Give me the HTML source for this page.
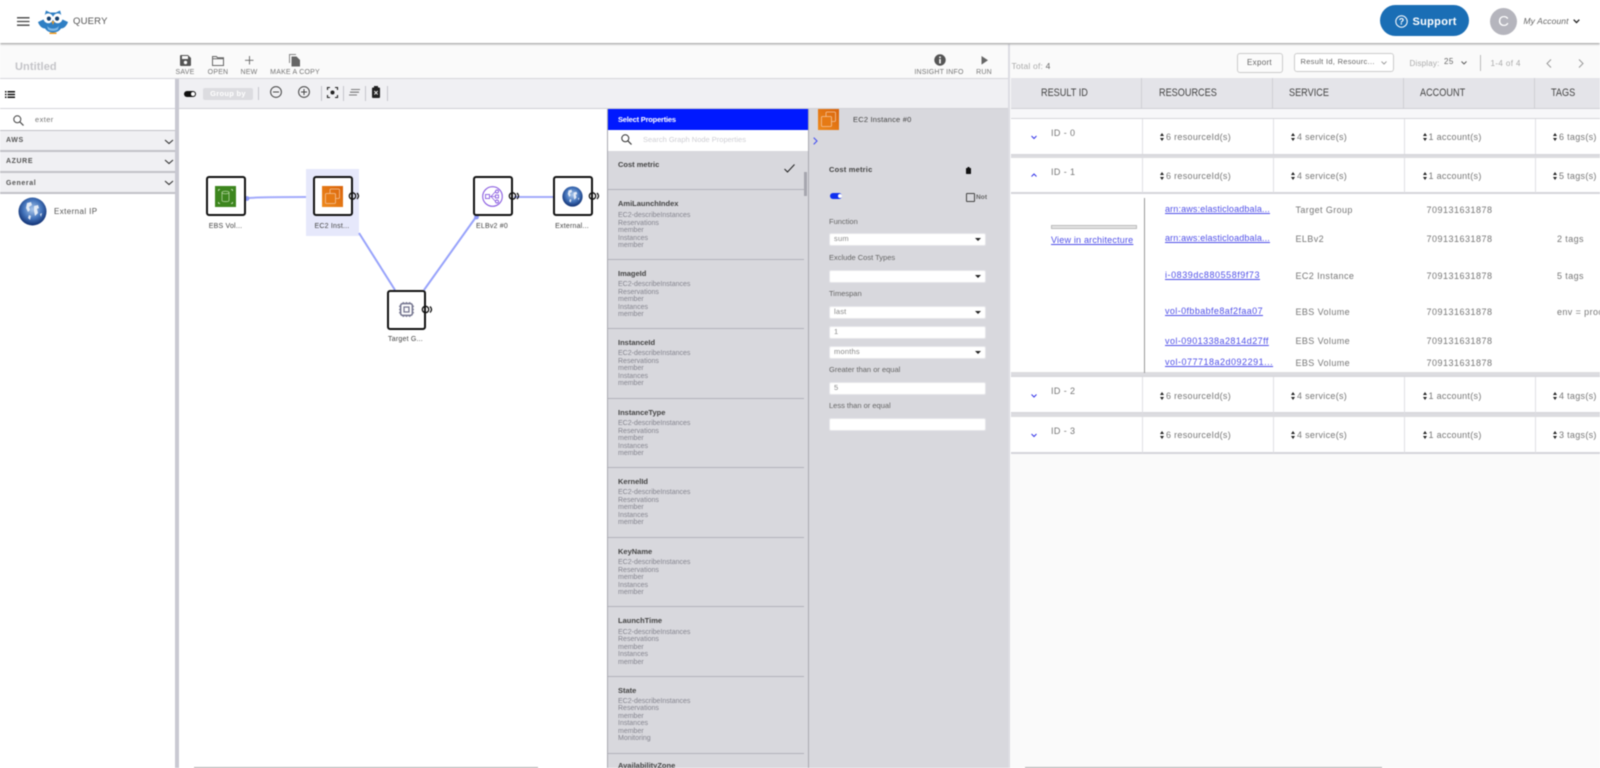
<!DOCTYPE html>
<html><head><meta charset="utf-8"><title>Query</title>
<style>
*{box-sizing:border-box}
html,body{margin:0;padding:0;width:1600px;height:768px;overflow:hidden;background:#fff;font-family:"Liberation Sans",sans-serif;color:#555}
#w{position:relative;width:1600px;height:768px;overflow:hidden;filter:blur(.45px)}
.a{position:absolute}
.t{position:absolute;white-space:nowrap;line-height:12px;font-size:8px;letter-spacing:.4px}
.c{transform:translateX(-50%)}
.b{font-weight:700}
svg{position:absolute;overflow:visible}
.sep{position:absolute;width:1px;background:#c6c6cc}
.acc{position:absolute;left:0;width:175px;height:20px;background:#f0f0f3;border-bottom:2px solid #c2c2c8}
.node{position:absolute;width:39.5px;height:40px;border:2px solid #111;border-radius:3px;background:#fff}
.nl{position:absolute;font-size:7px;letter-spacing:.2px;color:#444;line-height:10px;white-space:nowrap;transform:translateX(-50%)}
.line{position:absolute;left:608px;width:196px;height:1px;background:#b3b3ba}
.h{position:absolute;left:618px;font-size:7.5px;font-weight:700;color:#444;letter-spacing:0;line-height:10px;white-space:nowrap}
.s{position:absolute;left:618px;font-size:7px;color:#85858f;letter-spacing:0;line-height:7.5px;white-space:pre}
.lb{position:absolute;left:829px;font-size:7.5px;color:#666;letter-spacing:0;line-height:10px;white-space:nowrap}
.in{position:absolute;left:829px;width:157px;height:12.5px;background:#fff;border:1px solid #e5e5e9;border-radius:2px;font-size:7.5px;color:#888;line-height:10.5px;padding-left:4px;letter-spacing:.2px}
.in.sel:after{content:"";position:absolute;right:4px;top:4px;border:3px solid transparent;border-top:3.5px solid #222;border-bottom:0}
.th{position:absolute;top:78px;height:31px;background:#e4e4e9;border-right:1px solid #cfcfd5;border-bottom:1px solid #cfcfd5;font-size:11px;line-height:30px;color:#444}
.th span{display:inline-block;transform:scaleX(.83);transform-origin:left center}
.row{position:absolute;left:1011px;width:589px;background:#fff;border-top:1px solid #d5d5da;border-bottom:2px solid #d5d5da}
.v{position:absolute;width:1px;background:#e0e0e4}
.r{position:absolute;font-size:9px;color:#777;letter-spacing:.4px;line-height:12px;white-space:nowrap}
.lk{position:absolute;left:1165px;font-size:9px;color:#4f4fe8;text-decoration:underline;letter-spacing:.45px;line-height:12px;white-space:nowrap}
.ar{letter-spacing:.3px}
.ar:before{content:"";position:absolute;left:-6px;top:2px;border:2px solid transparent;border-bottom:3px solid #222;border-top:0}
.ar:after{content:"";position:absolute;left:-6px;top:6.5px;border:2px solid transparent;border-top:3px solid #222;border-bottom:0}
.tl{position:absolute;top:68px;font-size:7px;color:#777;letter-spacing:.2px;line-height:10px;white-space:nowrap;transform:translateX(-50%)}
</style></head><body><div id="w">

<!-- header -->
<div class="a" style="left:0;top:0;width:1600px;height:43px;background:#fff;box-shadow:0 1px 2px #8f8f8f;z-index:5"></div>
<div style="position:absolute;z-index:6;left:0;top:0;width:1600px;height:43px">
<svg style="left:17px;top:17px" width="13" height="9"><path d="M0 .8H12.5M0 4.5H12.5M0 8.2H12.5" stroke="#444" stroke-width="1.3"/></svg>
<svg style="left:38px;top:9.5px" width="30" height="24" viewBox="0 0 30 24">
<path d="M0 12L6.5 9C6.5 6 7 3 8 .5L12 2.5H18L22 .5C23 3 23.5 6 23.5 9L30 12C28.5 16.5 25.5 18.5 23 18.5C21 21.5 18 22.5 15 22.5C12 22.5 9 21.5 7 18.5C4.5 18.5 1.5 16.5 0 12Z" fill="#2f7fc4"/>
<circle cx="10.3" cy="8.3" r="4.9" fill="#fff"/><circle cx="19.7" cy="8.3" r="4.9" fill="#fff"/>
<circle cx="10.9" cy="8.6" r="2.1" fill="#16406e"/><circle cx="19.1" cy="8.6" r="2.1" fill="#16406e"/>
<path d="M13.6 11.2h2.8L15 15z" fill="#f09a1e"/><path d="M11.5 22.5h7V24h-7z" fill="#f09a1e"/>
<path d="M9 15.5C11 19.5 19 19.5 21 15.5L20 19.5C18 21.5 12 21.5 10 19.5Z" fill="#7db7e6"/></svg>
<div class="t" style="left:73px;top:15.5px;font-size:9.5px;color:#555;letter-spacing:.2px">QUERY</div>
<div class="a" style="left:1380px;top:5px;width:89px;height:31px;border-radius:16px;background:#1a6eb5"></div>
<svg style="left:1395px;top:14.5px" width="13" height="13" viewBox="0 0 13 13"><circle cx="6.5" cy="6.5" r="5.7" fill="none" stroke="#fff" stroke-width="1"/><text x="6.5" y="9.6" font-size="9" font-weight="700" fill="#fff" text-anchor="middle" font-family="Liberation Sans">?</text></svg>
<div class="t b" style="left:1412.5px;top:15.5px;font-size:11px;color:#fff;letter-spacing:.3px">Support</div>
<div class="a" style="left:1490px;top:8px;width:27px;height:27px;border-radius:50%;background:#b5b5bd;color:#fff;font-size:15px;line-height:27px;text-align:center">C</div>
<div class="t" style="left:1523.5px;top:15px;font-style:italic;font-size:8.5px;color:#666;letter-spacing:.1px">My Account</div>
<svg style="left:1573px;top:19px" width="7" height="5"><path d="M.7.7L3.5 3.6 6.3.7" fill="none" stroke="#222" stroke-width="1.3"/></svg>
</div>

<!-- top toolbar -->
<div class="a" style="left:0;top:44px;width:1009px;height:35px;background:#fafafa;border-bottom:1px solid #d6d6db"></div>
<div class="t b" style="left:15px;top:61px;font-size:11px;color:#c4c4c8;letter-spacing:.1px">Untitled</div>
<svg style="left:180px;top:55px" width="11" height="11"><path d="M0 1a1 1 0 011-1h7l3 3v7a1 1 0 01-1 1H1a1 1 0 01-1-1z" fill="#555"/><rect x="2" y="1" width="6" height="3" fill="#fafafa"/><circle cx="5.5" cy="7.5" r="1.7" fill="#fafafa"/></svg>
<div class="tl" style="left:185px">SAVE</div>
<svg style="left:212px;top:55.5px" width="12" height="10"><path d="M.5 9.5V.5H4.5L5.5 1.8H11.5V9.5ZM.5 2.8H11.5" fill="none" stroke="#666" stroke-width="1"/></svg>
<div class="tl" style="left:218px">OPEN</div>
<svg style="left:245px;top:56px" width="9" height="9"><path d="M4.5 0V8.5M0 4.3H8.5" stroke="#666" stroke-width=".9"/></svg>
<div class="tl" style="left:249px">NEW</div>
<svg style="left:289px;top:53.5px" width="12" height="13"><path d="M.5 9V.5H7" fill="none" stroke="#888" stroke-width="1"/><path d="M2.5 2.5H7.5L11 6V12.5H2.5Z" fill="#666"/></svg>
<div class="tl" style="left:295px">MAKE A COPY</div>
<svg style="left:934px;top:54px" width="12" height="12"><circle cx="6" cy="6" r="5.7" fill="#555"/><rect x="5.2" y="5" width="1.6" height="4.5" fill="#fff"/><rect x="5.2" y="2.5" width="1.6" height="1.6" fill="#fff"/></svg>
<div class="tl" style="left:939px">INSIGHT INFO</div>
<svg style="left:981px;top:56px" width="8" height="9"><path d="M.5 0L7 4.3.5 8.6Z" fill="#666"/></svg>
<div class="tl" style="left:984px">RUN</div>

<!-- left panel -->
<div class="a" style="left:0;top:79px;width:175px;height:30px;background:#fff;border-bottom:1px solid #d5d5da"></div>
<svg style="left:5px;top:90.5px" width="10" height="7"><path d="M0 .8H1.5M0 3.5H1.5M0 6.2H1.5M2.5 .8H10M2.5 3.5H10M2.5 6.2H10" stroke="#111" stroke-width="1.5"/></svg>
<svg style="left:13px;top:115px" width="11" height="11"><circle cx="4.3" cy="4.3" r="3.5" fill="none" stroke="#444" stroke-width="1"/><path d="M7 7L10.5 10.5" stroke="#444" stroke-width="1.2"/></svg>
<div class="t" style="left:35px;top:113.5px;color:#777;font-size:7.5px">exter</div>
<div class="acc" style="top:130px;border-top:1px solid #c2c2c8;height:22px"></div>
<div class="acc" style="top:152px;height:21px"></div>
<div class="acc" style="top:173px;height:21px"></div>
<div class="t b" style="left:6px;top:135px;font-size:7px;letter-spacing:.6px;color:#555">AWS</div>
<div class="t b" style="left:6px;top:156px;font-size:7px;letter-spacing:.6px;color:#555">AZURE</div>
<div class="t b" style="left:6px;top:177.5px;font-size:7px;letter-spacing:.6px;color:#555">General</div>
<svg style="left:164px;top:138.5px" width="10" height="6"><path d="M1 1L5 4.5 9 1" fill="none" stroke="#333" stroke-width="1.1"/></svg>
<svg style="left:164px;top:159px" width="10" height="6"><path d="M1 1L5 4.5 9 1" fill="none" stroke="#333" stroke-width="1.1"/></svg>
<svg style="left:164px;top:180px" width="10" height="6"><path d="M1 1L5 4.5 9 1" fill="none" stroke="#333" stroke-width="1.1"/></svg>
<svg style="left:18px;top:197px" width="29" height="29" viewBox="0 0 29 29"><defs><radialGradient id="g" cx=".5" cy=".42" r=".6"><stop offset="0" stop-color="#a9c6ea"/><stop offset=".55" stop-color="#4474bb"/><stop offset="1" stop-color="#0c2a6c"/></radialGradient></defs><circle cx="14.5" cy="14.5" r="14" fill="url(#g)"/><path d="M9 6l4-1 1 3-3 2 1 3-2 2-2-4zM16 9l4-1 1 3-2 1 1 4-3 3-1-5zM11 18l2 1-1 4-2-2zM22 17l2-1-1 4z" fill="#eef3fa" opacity=".9"/></svg>
<div class="t" style="left:54px;top:205.5px;font-size:8px;color:#555">External IP</div>
<div class="a" style="left:175px;top:79px;width:4px;height:689px;background:#c9c9d2"></div>

<!-- canvas toolbar -->
<div class="a" style="left:179px;top:79px;width:429px;height:30px;background:#f0f0f3;border-bottom:1px solid #d0d0d5"></div>
<div class="a" style="left:608px;top:79px;width:400px;height:30px;background:#f0f0f3;border-bottom:1px solid #d0d0d5"></div>
<div class="a" style="left:184px;top:91px;width:11.5px;height:6px;border-radius:3px;background:#111"></div>
<div class="a" style="left:190.5px;top:92px;width:4px;height:4px;border-radius:50%;background:#fff"></div>
<div class="a b" style="left:203px;top:88px;width:50px;height:12px;background:#dcdce0;border-radius:2px;color:#fff;font-size:7.5px;line-height:12px;text-align:center;letter-spacing:.3px">Group by</div>
<div class="sep" style="left:258px;top:87px;height:13px"></div>
<svg style="left:270px;top:86px" width="12" height="12"><circle cx="6" cy="6" r="5.4" fill="none" stroke="#444" stroke-width="1"/><path d="M3 6H9" stroke="#444"/></svg>
<svg style="left:298px;top:86px" width="12" height="12"><circle cx="6" cy="6" r="5.4" fill="none" stroke="#444" stroke-width="1"/><path d="M3 6H9M6 3V9" stroke="#444"/></svg>
<div class="sep" style="left:321px;top:86px;height:15px"></div>
<svg style="left:327px;top:87px" width="11" height="11"><path d="M.5 3V.5H3M8 .5H10.5V3M10.5 8V10.5H8M3 10.5H.5V8" fill="none" stroke="#222" stroke-width="1.1"/><circle cx="5.5" cy="5.5" r="2" fill="#222"/></svg>
<div class="sep" style="left:343px;top:86px;height:15px"></div>
<svg style="left:349px;top:89px" width="11" height="7"><path d="M2 .5H11M1 3.2H10M0 6H8" stroke="#555" stroke-width=".8"/></svg>
<div class="sep" style="left:365px;top:86px;height:15px"></div>
<svg style="left:372px;top:86px" width="8" height="12"><rect x="2" y="0" width="4" height="1.5" fill="#222"/><rect x="0" y="1.5" width="8" height="10.5" rx="1" fill="#222"/><path d="M2.3 5L5.7 8.5M5.7 5L2.3 8.5" stroke="#eee" stroke-width="1"/></svg>
<div class="sep" style="left:387px;top:86px;height:15px"></div>

<!-- canvas edges -->
<div class="a" style="left:306px;top:169px;width:53px;height:67px;background:#e6e8fb"></div>
<svg style="left:0;top:0" width="1600" height="768">
<path d="M246 198C265 197 285 197 306 197" fill="none" stroke="#a3abfc" stroke-width="2"/>
<path d="M359 233L395 290" fill="none" stroke="#98a3fb" stroke-width="2"/>
<path d="M424 290L476 217" fill="none" stroke="#98a3fb" stroke-width="2"/>
<path d="M514 197C528 197 540 197 553 197" fill="none" stroke="#a3abfc" stroke-width="2"/>
<circle cx="247" cy="198.5" r="2.4" fill="#8f9bfa"/><circle cx="476.5" cy="217" r="2.4" fill="#8f9bfa"/>
</svg>

<!-- nodes -->
<div class="node" style="left:206px;top:176px"></div>
<svg style="left:215px;top:186px" width="21" height="21" viewBox="0 0 21 21"><rect width="21" height="21" fill="#3d861e"/><ellipse cx="10.5" cy="6.5" rx="3.5" ry="1.3" fill="none" stroke="#c4dfb2" stroke-width=".7"/><path d="M7 6.5V14.5C7 16 14 16 14 14.5V6.5" fill="none" stroke="#c4dfb2" stroke-width=".7"/><path d="M3.5 3.5h1.5M3.5 3.5v1.5M17.5 3.5h-1.5M17.5 3.5v1.5M3.5 17.5h1.5M3.5 17.5v-1.5M17.5 17.5h-1.5M17.5 17.5v-1.5" stroke="#d8eacb" stroke-width=".8"/></svg>
<div class="nl" style="left:225.5px;top:222px">EBS Vol...</div>

<div class="node" style="left:313px;top:176px"></div>
<svg style="left:322px;top:186px" width="21" height="21" viewBox="0 0 21 21"><defs><linearGradient id="o" x1="0" y1="1" x2="1" y2="0"><stop offset="0" stop-color="#ee8a1c"/><stop offset="1" stop-color="#d9640c"/></linearGradient></defs><rect width="21" height="21" fill="url(#o)"/><rect x="8" y="3" width="9.5" height="9.5" rx="1" fill="none" stroke="#f5c49a" stroke-width=".8"/><rect x="3.5" y="7.5" width="10" height="10" rx="1" fill="#e67a14" stroke="#f5c49a" stroke-width=".8"/></svg>
<div class="nl" style="left:332px;top:222px">EC2 Inst...</div>

<div class="node" style="left:386.5px;top:290px"></div>
<svg style="left:398.5px;top:302px" width="15" height="15" viewBox="0 0 14 14"><rect x="1.5" y="1.5" width="11" height="11" rx="2" fill="none" stroke="#757690" stroke-width="1.5"/><rect x="4.7" y="4.7" width="4.6" height="4.6" fill="none" stroke="#757690" stroke-width="1.2"/><path d="M4 0v1.5M7 0v1.5M10 0v1.5M4 12.5V14M7 12.5V14M10 12.5V14M0 4h1.5M0 7h1.5M0 10h1.5M12.5 4H14M12.5 7H14M12.5 10H14" stroke="#757690" stroke-width="1"/></svg>
<div class="nl" style="left:405.5px;top:334.5px">Target G...</div>

<div class="node" style="left:473px;top:176px"></div>
<svg style="left:482px;top:186px" width="21" height="21" viewBox="0 0 21 21"><circle cx="10.5" cy="10.5" r="9.8" fill="none" stroke="#8a5ce0" stroke-width="1.1"/><rect x="3.5" y="8.5" width="4" height="4" fill="none" stroke="#8a5ce0" stroke-width=".9"/><path d="M7.5 10.5H13.5M9 10.5L13.5 5.5M9 10.5L13.5 15.5" stroke="#8a5ce0" stroke-width=".8"/><circle cx="15" cy="5.5" r="1.5" fill="none" stroke="#8a5ce0" stroke-width=".9"/><rect x="13.5" y="9" width="3" height="3" fill="none" stroke="#8a5ce0" stroke-width=".9"/><circle cx="15" cy="15.5" r="1.5" fill="none" stroke="#8a5ce0" stroke-width=".9"/></svg>
<div class="nl" style="left:492px;top:222px">ELBv2 #0</div>

<div class="node" style="left:553px;top:176px"></div>
<svg style="left:562px;top:186px" width="21" height="21" viewBox="0 0 29 29"><circle cx="14.5" cy="14.5" r="14" fill="url(#g)"/><path d="M9 6l4-1 1 3-3 2 1 3-2 2-2-4zM16 9l4-1 1 3-2 1 1 4-3 3-1-5zM11 18l2 1-1 4-2-2zM22 17l2-1-1 4z" fill="#eef3fa" opacity=".9"/></svg>
<div class="nl" style="left:572px;top:222px">External...</div>

<svg style="left:0;top:0" width="1600" height="768" fill="none" stroke="#111" stroke-width="1.3">
<circle cx="352.5" cy="196" r="3.2"/><path d="M357 193C359 195 359 197 357 199"/>
<circle cx="425.5" cy="309.5" r="3.2"/><path d="M430 306.5C432 308.5 432 310.5 430 312.5"/>
<circle cx="512.5" cy="196" r="3.2"/><path d="M517 193C519 195 519 197 517 199"/>
<circle cx="592.5" cy="196" r="3.2"/><path d="M597 193C599 195 599 197 597 199"/>
</svg>

<!-- select properties panel -->
<div class="a" style="left:607px;top:109px;width:1px;height:659px;background:#a9a9b1"></div>
<div class="a" style="left:608px;top:109px;width:200px;height:21px;background:#0019ff"></div>
<div class="t b" style="left:618px;top:114px;color:#fff;font-size:7.5px;letter-spacing:-.2px">Select Properties</div>
<div class="a" style="left:608px;top:130px;width:200px;height:22px;background:#fff"></div>
<svg style="left:621px;top:134px" width="11" height="11"><circle cx="4.3" cy="4.3" r="3.5" fill="none" stroke="#333" stroke-width="1"/><path d="M7 7L10.5 10.5" stroke="#333" stroke-width="1.2"/></svg>
<div class="t" style="left:643px;top:134px;color:#cfcfd4;font-size:7.5px;letter-spacing:0">Search Graph Node Properties</div>
<div class="a" style="left:608px;top:151px;width:200px;height:617px;background:#d8d8dd"></div>
<div class="a" style="left:808px;top:109px;width:200px;height:659px;background:#d8d8dd;border-left:1px solid #a9a9b1"></div>
<div class="a" style="left:804px;top:172px;width:3px;height:24px;background:#a6a6ae"></div>

<div class="h" style="top:160px">Cost metric</div>
<svg style="left:784px;top:164px" width="11" height="9"><path d="M.5 5L3.5 8 10.5.5" fill="none" stroke="#222" stroke-width="1"/></svg>
<div class="line" style="top:189px;height:1px"></div>

<div class="h" style="top:198.5px">AmiLaunchIndex</div>
<div class="s" style="top:212px">EC2-describeInstances
Reservations
member
Instances
member</div>
<div class="line" style="top:258.5px"></div>

<div class="h" style="top:269px">ImageId</div>
<div class="s" style="top:281px">EC2-describeInstances
Reservations
member
Instances
member</div>
<div class="line" style="top:328px"></div>

<div class="h" style="top:338px">InstanceId</div>
<div class="s" style="top:350px">EC2-describeInstances
Reservations
member
Instances
member</div>
<div class="line" style="top:398px"></div>

<div class="h" style="top:408px">InstanceType</div>
<div class="s" style="top:420px">EC2-describeInstances
Reservations
member
Instances
member</div>
<div class="line" style="top:467px"></div>

<div class="h" style="top:477px">KernelId</div>
<div class="s" style="top:489px">EC2-describeInstances
Reservations
member
Instances
member</div>
<div class="line" style="top:537px"></div>

<div class="h" style="top:546.5px">KeyName</div>
<div class="s" style="top:559px">EC2-describeInstances
Reservations
member
Instances
member</div>
<div class="line" style="top:606px"></div>

<div class="h" style="top:616px">LaunchTime</div>
<div class="s" style="top:628.5px">EC2-describeInstances
Reservations
member
Instances
member</div>
<div class="line" style="top:676px"></div>

<div class="h" style="top:685.5px">State</div>
<div class="s" style="top:697.5px">EC2-describeInstances
Reservations
member
Instances
member
Monitoring</div>
<div class="line" style="top:753px"></div>
<div class="h" style="top:761px">AvailabilityZone</div>

<!-- node props -->
<svg style="left:818px;top:109px" width="21" height="21" viewBox="0 0 21 21"><rect width="21" height="21" fill="url(#o)"/><rect x="8" y="3" width="9.5" height="9.5" rx="1" fill="none" stroke="#f5c49a" stroke-width=".8"/><rect x="3.5" y="7.5" width="10" height="10" rx="1" fill="#e67a14" stroke="#f5c49a" stroke-width=".8"/></svg>
<div class="t" style="left:853px;top:114px;color:#444;font-size:7.5px;letter-spacing:.2px">EC2 Instance #0</div>
<svg style="left:812.5px;top:136.5px" width="5" height="8"><path d="M.7.7L4 4 .7 7.3" fill="none" stroke="#4a55f0" stroke-width="1.1"/></svg>
<div class="t b" style="left:829px;top:164px;color:#444;font-size:7.5px;letter-spacing:.2px">Cost metric</div>
<svg style="left:966px;top:166.5px" width="5" height="7"><rect x="1.5" y="0" width="2" height="1" fill="#111"/><rect x="0" y="1" width="5" height="6" rx=".6" fill="#111"/></svg>
<div class="a" style="left:830px;top:193px;width:12px;height:6px;border-radius:3px;background:#1030f0"></div>
<div class="a" style="left:837.5px;top:194px;width:4px;height:4px;border-radius:50%;background:#fff"></div>
<div class="a" style="left:966px;top:193px;width:8.5px;height:8.5px;border:1px solid #444;border-radius:1px"></div>
<div class="t b" style="left:976px;top:191.5px;font-size:6.5px;letter-spacing:.1px;color:#666">Not</div>
<div class="lb" style="top:216.5px">Function</div>
<div class="in sel" style="top:233px">sum</div>
<div class="lb" style="top:253px">Exclude Cost Types</div>
<div class="in sel" style="top:270px"></div>
<div class="lb" style="top:288.5px">Timespan</div>
<div class="in sel" style="top:306px">last</div>
<div class="in" style="top:326px">1</div>
<div class="in sel" style="top:346px">months</div>
<div class="lb" style="top:365px">Greater than or equal</div>
<div class="in" style="top:382px">5</div>
<div class="lb" style="top:401px">Less than or equal</div>
<div class="in" style="top:418px"></div>

<!-- results -->
<div class="a" style="left:1008px;top:44px;width:2px;height:724px;background:#dcdce2"></div>
<div class="a" style="left:1010px;top:44px;width:590px;height:724px;background:#fafafa"></div>
<div class="t" style="left:1011.5px;top:59.5px;color:#aaa;font-size:8.5px;letter-spacing:.2px">Total of: <span style="color:#666">4</span></div>
<div class="a" style="left:1236.5px;top:53px;width:46px;height:19.5px;border:1px solid #ccc;border-radius:3px;background:#fbfbfb;color:#666;font-size:8px;line-height:18px;text-align:center;letter-spacing:.3px">Export</div>
<div class="a" style="left:1293.5px;top:53px;width:100px;height:18.5px;border:1px solid #ccc;border-radius:3px;background:#fff;color:#666;font-size:7.5px;line-height:16px;padding-left:6px;letter-spacing:.3px">Result Id, Resourc...</div>
<svg style="left:1381px;top:61px" width="6" height="4"><path d="M.5.5L3 3 5.5.5" fill="none" stroke="#888" stroke-width=".8"/></svg>
<div class="t" style="left:1409.5px;top:57.5px;color:#aaa;font-size:8px;letter-spacing:.2px">Display:</div>
<div class="t" style="left:1444px;top:56px;color:#666;font-size:8px">25</div>
<svg style="left:1460.5px;top:61px" width="6" height="4"><path d="M.5.5L3 3 5.5.5" fill="none" stroke="#555" stroke-width=".9"/></svg>
<div class="a" style="left:1479.5px;top:55px;width:1px;height:16px;background:#bbb"></div>
<div class="t" style="left:1490.5px;top:57.5px;color:#aaa;font-size:8px">1-4 of 4</div>
<svg style="left:1546px;top:58.5px" width="6" height="9"><path d="M5 .5L1 4.5 5 8.5" fill="none" stroke="#999" stroke-width="1"/></svg>
<svg style="left:1578px;top:58.5px" width="6" height="9"><path d="M1 .5L5 4.5 1 8.5" fill="none" stroke="#999" stroke-width="1"/></svg>

<div class="th" style="left:1011px;width:131px;padding-left:30px"><span>RESULT ID</span></div>
<div class="th" style="left:1142px;width:131px;padding-left:17px"><span>RESOURCES</span></div>
<div class="th" style="left:1273px;width:131px;padding-left:16px"><span>SERVICE</span></div>
<div class="th" style="left:1404px;width:131px;padding-left:16px"><span>ACCOUNT</span></div>
<div class="th" style="left:1535px;width:65px;padding-left:16px;border-right:0"><span>TAGS</span></div>

<div class="a" style="left:1010px;top:109px;width:590px;height:9px;background:#f7f7f9"></div>
<div class="row" style="top:118px;height:38px"></div>
<div class="row" style="top:157px;height:37px"></div>
<div class="a" style="left:1011px;top:194px;width:589px;height:179px;background:#fff"></div>
<div class="a" style="left:1011px;top:372px;width:589px;height:4px;background:#dcdce0"></div>
<div class="row" style="top:376px;height:38px"></div>
<div class="row" style="top:416px;height:38px"></div>
<div class="a" style="left:1011px;top:155px;width:589px;height:3px;background:#dcdce0"></div>
<div class="a" style="left:1011px;top:413px;width:589px;height:4px;background:#dcdce0"></div>

<div class="v" style="left:1142px;top:119px;height:35px"></div><div class="v" style="left:1273px;top:119px;height:35px"></div><div class="v" style="left:1404px;top:119px;height:35px"></div><div class="v" style="left:1535px;top:119px;height:35px"></div>
<div class="v" style="left:1142px;top:158px;height:35px"></div><div class="v" style="left:1273px;top:158px;height:35px"></div><div class="v" style="left:1404px;top:158px;height:35px"></div><div class="v" style="left:1535px;top:158px;height:35px"></div>
<div class="v" style="left:1142px;top:377px;height:36px"></div><div class="v" style="left:1273px;top:377px;height:36px"></div><div class="v" style="left:1404px;top:377px;height:36px"></div><div class="v" style="left:1535px;top:377px;height:36px"></div>
<div class="v" style="left:1142px;top:417px;height:36px"></div><div class="v" style="left:1273px;top:417px;height:36px"></div><div class="v" style="left:1404px;top:417px;height:36px"></div><div class="v" style="left:1535px;top:417px;height:36px"></div>

<svg style="left:0;top:0" width="1600" height="768" fill="none" stroke="#3535e8" stroke-width="1">
<path d="M1031.5 136L1034 138.5 1036.5 136"/><path d="M1031.5 176.5L1034 174 1036.5 176.5"/><path d="M1031.5 394.5L1034 397 1036.5 394.5"/><path d="M1031.5 434L1034 436.5 1036.5 434"/></svg>

<div class="r" style="left:1051px;top:127px">ID - 0</div>
<div class="r ar" style="left:1166px;top:131px">6 resourceId(s)</div>
<div class="r ar" style="left:1297px;top:131px">4 service(s)</div>
<div class="r ar" style="left:1428.5px;top:131px">1 account(s)</div>
<div class="r ar" style="left:1559px;top:131px">6 tags(s)</div>

<div class="r" style="left:1051px;top:166px">ID - 1</div>
<div class="r ar" style="left:1166px;top:170px">6 resourceId(s)</div>
<div class="r ar" style="left:1297px;top:170px">4 service(s)</div>
<div class="r ar" style="left:1428.5px;top:170px">1 account(s)</div>
<div class="r ar" style="left:1559px;top:170px">5 tags(s)</div>

<div class="r" style="left:1051px;top:385px">ID - 2</div>
<div class="r ar" style="left:1166px;top:390px">6 resourceId(s)</div>
<div class="r ar" style="left:1297px;top:390px">4 service(s)</div>
<div class="r ar" style="left:1428.5px;top:390px">1 account(s)</div>
<div class="r ar" style="left:1559px;top:390px">4 tags(s)</div>

<div class="r" style="left:1051px;top:425px">ID - 3</div>
<div class="r ar" style="left:1166px;top:429px">6 resourceId(s)</div>
<div class="r ar" style="left:1297px;top:429px">4 service(s)</div>
<div class="r ar" style="left:1428.5px;top:429px">1 account(s)</div>
<div class="r ar" style="left:1559px;top:429px">3 tags(s)</div>

<div class="a" style="left:1143.5px;top:198px;width:1px;height:175px;background:#999"></div>
<div class="a" style="left:1051px;top:225px;width:86px;height:4px;background:#e4e4e4;border:1px solid #bbb"></div>
<div class="lk" style="left:1051px;top:234px;letter-spacing:.2px">View in architecture</div>
<div class="lk" style="top:203px;letter-spacing:.15px">arn:aws:elasticloadbala...</div>
<div class="lk" style="top:232px;letter-spacing:.15px">arn:aws:elasticloadbala...</div>
<div class="lk" style="top:269px;letter-spacing:.55px">i-0839dc880558f9f73</div>
<div class="lk" style="top:305px;letter-spacing:.4px">vol-0fbbabfe8af2faa07</div>
<div class="lk" style="top:334.5px">vol-0901338a2814d27ff</div>
<div class="lk" style="top:356px;letter-spacing:.5px">vol-077718a2d092291...</div>

<div class="r" style="left:1295.5px;top:204px">Target Group</div>
<div class="r" style="left:1295.5px;top:233px">ELBv2</div>
<div class="r" style="left:1295.5px;top:269.5px">EC2 Instance</div>
<div class="r" style="left:1295.5px;top:306px">EBS Volume</div>
<div class="r" style="left:1295.5px;top:335px">EBS Volume</div>
<div class="r" style="left:1295.5px;top:357px">EBS Volume</div>

<div class="r" style="left:1426.5px;top:204px;letter-spacing:.5px">709131631878</div>
<div class="r" style="left:1426.5px;top:233px;letter-spacing:.5px">709131631878</div>
<div class="r" style="left:1426.5px;top:269.5px;letter-spacing:.5px">709131631878</div>
<div class="r" style="left:1426.5px;top:306px;letter-spacing:.5px">709131631878</div>
<div class="r" style="left:1426.5px;top:335px;letter-spacing:.5px">709131631878</div>
<div class="r" style="left:1426.5px;top:357px;letter-spacing:.5px">709131631878</div>

<div class="r" style="left:1557px;top:233px">2 tags</div>
<div class="r" style="left:1557px;top:269.5px">5 tags</div>
<div class="r" style="left:1557px;top:306px">env = prod</div>

<div class="a" style="left:194px;top:767px;width:344px;height:1px;background:#aaa"></div>
<div class="a" style="left:1025px;top:767px;width:357px;height:1px;background:#aaa"></div>
</div></body></html>
